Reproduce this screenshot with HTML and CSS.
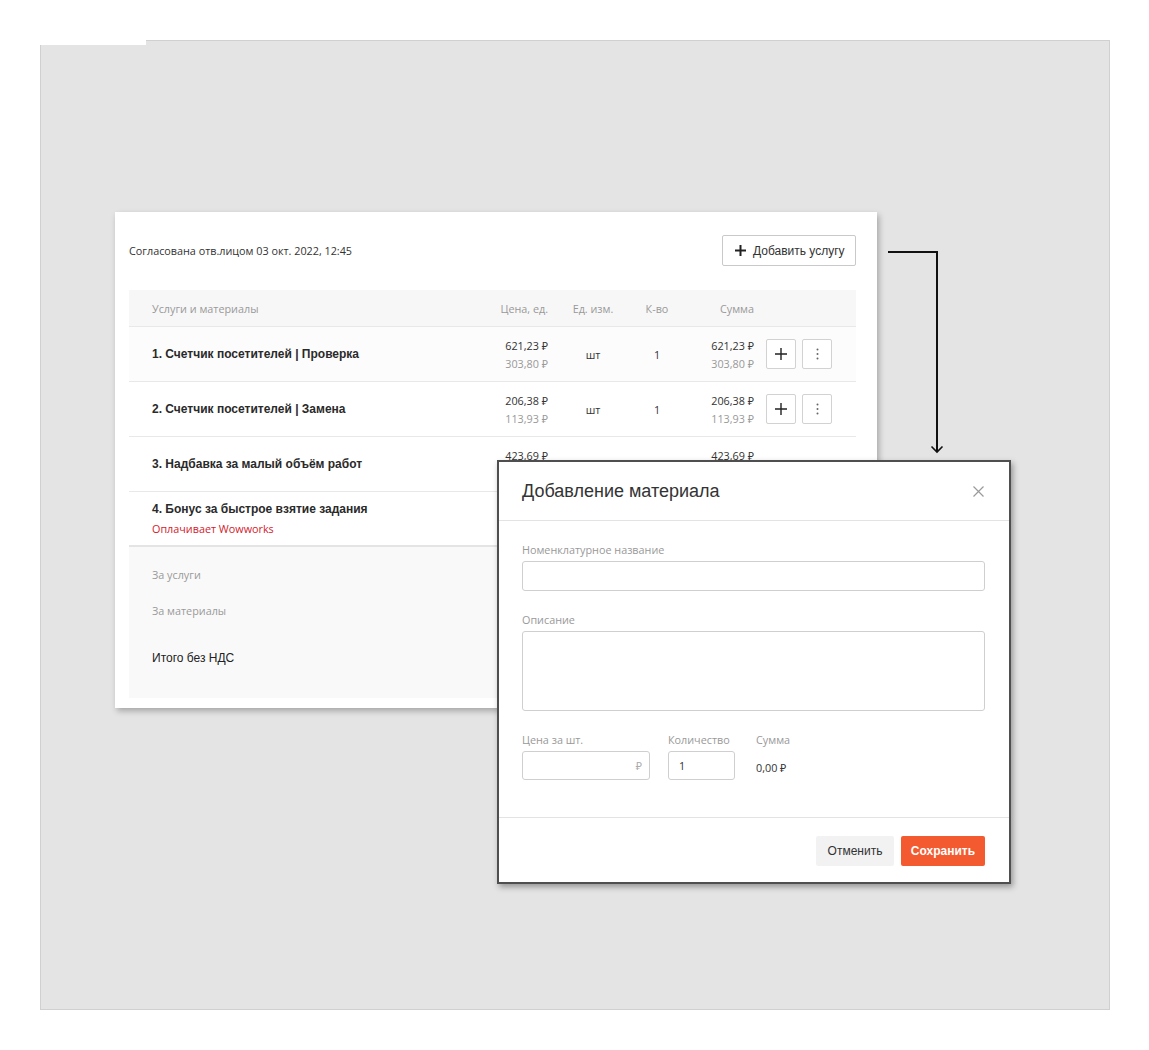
FILE: index.html
```html
<!DOCTYPE html>
<html lang="ru">
<head>
  <meta charset="UTF-8">
  <meta name="viewport" content="width=device-width, initial-scale=1.0">
  <title>Добавление материала</title>
  <link rel="stylesheet" href="styles.css">
</head>
<body>

<div class="canvas">
  <span class="corner"></span>

  <section class="card">
    <header class="card-head">
      <span class="status">Согласована отв.лицом 03 окт. 2022, 12:45</span>
      <button class="btn-add">
        <svg width="11" height="11" viewBox="0 0 11 11"><path d="M5.5 0v11M0 5.5h11" stroke="#222" stroke-width="2"/></svg>
        Добавить услугу
      </button>
    </header>

    <div class="table">
      <div class="row head">
        <span>Услуги и материалы</span>
        <span class="num">Цена, ед.</span>
        <span class="mid">Ед. изм.</span>
        <span class="mid">К-во</span>
        <span class="num">Сумма</span>
        <span></span>
      </div>

      <div class="row hover">
        <span class="name">1. Счетчик посетителей | Проверка</span>
        <span class="num price"><b>621,23 ₽</b><i>303,80 ₽</i></span>
        <span class="mid">шт</span>
        <span class="mid">1</span>
        <span class="num price"><b>621,23 ₽</b><i>303,80 ₽</i></span>
        <span class="actions">
          <button class="icon-btn"><svg width="12" height="12" viewBox="0 0 12 12"><path d="M6 0v12M0 6h12" stroke="#222" stroke-width="1.4"/></svg></button>
          <button class="icon-btn"><svg width="3" height="12" viewBox="0 0 3 12"><circle cx="1.5" cy="1.5" r="1" fill="#666"/><circle cx="1.5" cy="6" r="1" fill="#666"/><circle cx="1.5" cy="10.5" r="1" fill="#666"/></svg></button>
        </span>
      </div>

      <div class="row">
        <span class="name">2. Счетчик посетителей | Замена</span>
        <span class="num price"><b>206,38 ₽</b><i>113,93 ₽</i></span>
        <span class="mid">шт</span>
        <span class="mid">1</span>
        <span class="num price"><b>206,38 ₽</b><i>113,93 ₽</i></span>
        <span class="actions">
          <button class="icon-btn"><svg width="12" height="12" viewBox="0 0 12 12"><path d="M6 0v12M0 6h12" stroke="#222" stroke-width="1.4"/></svg></button>
          <button class="icon-btn"><svg width="3" height="12" viewBox="0 0 3 12"><circle cx="1.5" cy="1.5" r="1" fill="#666"/><circle cx="1.5" cy="6" r="1" fill="#666"/><circle cx="1.5" cy="10.5" r="1" fill="#666"/></svg></button>
        </span>
      </div>

      <div class="row">
        <span class="name">3. Надбавка за малый объём работ</span>
        <span class="num price"><b>423,69 ₽</b><i>423,69 ₽</i></span>
        <span></span>
        <span></span>
        <span class="num price"><b>423,69 ₽</b><i>423,69 ₽</i></span>
        <span></span>
      </div>

      <div class="row last">
        <span class="name">4. Бонус за быстрое взятие задания<small>Оплачивает Wowworks</small></span>
        <span></span>
        <span></span>
        <span></span>
        <span></span>
        <span></span>
      </div>

      <div class="summary">
        <div class="sum-line">За услуги</div>
        <div class="sum-line">За материалы</div>
        <div class="sum-line total">Итого без НДС</div>
      </div>
    </div>
  </section>

  <svg class="arrow" width="70" height="220" viewBox="0 0 70 220">
    <path d="M8 12H57V212" fill="none" stroke="#111" stroke-width="2"/>
    <path d="M51.5 206.5L57 212L62.5 206.5" fill="none" stroke="#111" stroke-width="1.6"/>
  </svg>

  <div class="modal">
    <header class="modal-head">
      <h2>Добавление материала</h2>
      <svg class="close" width="11" height="11" viewBox="0 0 11 11"><path d="M0.5 0.5l10 10M10.5 0.5l-10 10" stroke="#9a9a9a" stroke-width="1.2"/></svg>
    </header>

    <div class="modal-body">
      <label class="field">
        <span class="label">Номенклатурное название</span>
        <span class="input"></span>
      </label>
      <label class="field">
        <span class="label">Описание</span>
        <span class="input textarea"></span>
      </label>
      <div class="field-row">
        <label class="field price-field">
          <span class="label">Цена за шт.</span>
          <span class="input small suffix">₽</span>
        </label>
        <label class="field qty-field">
          <span class="label">Количество</span>
          <span class="input small">1</span>
        </label>
        <div class="field">
          <span class="label">Сумма</span>
          <span class="total-value">0,00 ₽</span>
        </div>
      </div>
    </div>

    <footer class="modal-foot">
      <button class="btn-cancel">Отменить</button>
      <button class="btn-save">Сохранить</button>
    </footer>
  </div>
</div>

</body>
</html>
```

FILE: styles.css
```css
* {
  box-sizing: border-box;
}

body {
  margin: 0;
  background: #fff;
  font-family: "Open Sans", "Noto Sans", "DejaVu Sans", sans-serif;
  color: #333;
}

button {
  font-family: inherit;
  cursor: pointer;
}

.canvas {
  position: relative;
  width: 1070px;
  height: 970px;
  margin: 40px 0 0 40px;
  border: 1px solid #d0d0d0;
  background: #e4e4e4;
}

.corner {
  position: absolute;
  left: -2px;
  top: -2px;
  width: 107px;
  height: 6px;
  background: #fff;
}

/* Card with the services table */
.card {
  position: absolute;
  left: 74px;
  top: 171px;
  width: 762px;
  height: 496px;
  padding: 23px 21px 10px 14px;
  background: #fff;
  box-shadow: 2px 3px 6px rgba(0, 0, 0, 0.28);
}

.card-head {
  display: flex;
  justify-content: space-between;
  align-items: center;
  height: 31px;
  margin-bottom: 24px;
}

.status {
  font-size: 10.8px;
  color: #333;
}

.btn-add {
  display: flex;
  align-items: center;
  gap: 7px;
  width: 134px;
  height: 31px;
  padding: 0 10px 0 12px;
  border: 1px solid #c9c9c9;
  border-radius: 2px;
  background: #fff;
  font-family: "Liberation Sans", Arial, sans-serif;
  font-size: 12px;
  color: #333;
  white-space: nowrap;
}

.row {
  display: grid;
  grid-template-columns: 1fr 58px 90px 38px 78px 78px;
  align-items: center;
  height: 55px;
  padding: 0 24px 0 23px;
  border-bottom: 1px solid #e8e8e8;
  font-size: 10.8px;
  color: #333;
}

.row.head {
  height: 37px;
  background: #f7f7f7;
  color: #999;
}

.row.hover {
  background: #fcfcfc;
}

.row.last {
  border-bottom: 2px solid #e4e4e4;
}

.num {
  text-align: right;
}

.mid {
  text-align: center;
}

.name {
  font-family: "Liberation Sans", Arial, sans-serif;
  font-size: 12px;
  font-weight: bold;
  color: #2a2a2a;
}

.name small {
  display: block;
  margin-top: 5px;
  font-family: "Open Sans", "Noto Sans", sans-serif;
  font-size: 10.8px;
  font-weight: normal;
  color: #d4202a;
}

.price {
  display: flex;
  flex-direction: column;
  align-items: flex-end;
  gap: 3px;
  white-space: nowrap;
}

.price b {
  font-weight: normal;
  color: #333;
}

.price i {
  font-style: normal;
  color: #999;
}

.actions {
  display: flex;
  justify-content: flex-end;
  gap: 6px;
}

.icon-btn {
  display: flex;
  align-items: center;
  justify-content: center;
  width: 30px;
  height: 30px;
  padding: 0;
  border: 1px solid #d2d2d2;
  border-radius: 2px;
  background: #fff;
}

.summary {
  height: 151px;
  padding: 20px 23px 0;
  background: #f9f9f9;
}

.sum-line {
  height: 16px;
  line-height: 16px;
  font-size: 10.8px;
  color: #999;
}

.sum-line + .sum-line {
  margin-top: 20px;
}

.sum-line.total {
  margin-top: 31px;
  font-family: "Liberation Sans", Arial, sans-serif;
  font-size: 12px;
  color: #222;
}

.arrow {
  position: absolute;
  left: 839px;
  top: 199px;
}

/* Modal window */
.modal {
  position: absolute;
  left: 456px;
  top: 419px;
  display: flex;
  flex-direction: column;
  width: 514px;
  height: 424px;
  border: 2px solid #4f4f4f;
  background: #fff;
  box-shadow: 2px 3px 6px rgba(0, 0, 0, 0.35);
}

.modal-head {
  display: flex;
  justify-content: space-between;
  align-items: center;
  height: 59px;
  padding: 0 25px 0 23px;
  border-bottom: 1px solid #e3e3e3;
}

.modal-head h2 {
  margin: 0;
  font-family: "Liberation Sans", Arial, sans-serif;
  font-size: 18px;
  font-weight: normal;
  color: #333;
}

.modal-body {
  flex: 1;
  padding: 21px 24px 0 23px;
}

.field {
  display: flex;
  flex-direction: column;
  gap: 4px;
  margin-bottom: 21px;
}

.label {
  height: 15px;
  line-height: 15px;
  font-size: 10.8px;
  color: #999;
}

.input {
  display: flex;
  align-items: center;
  height: 30px;
  padding: 0 10px;
  border: 1px solid #cfcfcf;
  border-radius: 3px;
  font-size: 10.8px;
  color: #333;
}

.input.textarea {
  height: 80px;
}

.field-row {
  display: flex;
}

.field-row .field {
  margin-bottom: 0;
}

.price-field {
  width: 128px;
  margin-right: 18px;
}

.qty-field {
  width: 67px;
  margin-right: 21px;
}

.input.small {
  height: 29px;
}

.input.suffix {
  justify-content: flex-end;
  padding-right: 7px;
  color: #aaa;
}

.total-value {
  height: 29px;
  line-height: 33px;
  font-size: 10.8px;
  color: #333;
}

.modal-foot {
  display: flex;
  justify-content: flex-end;
  gap: 7px;
  height: 65px;
  padding: 18px 24px 0;
  border-top: 1px solid #e3e3e3;
}

.btn-cancel,
.btn-save {
  height: 30px;
  border: none;
  border-radius: 2px;
  font-family: "Liberation Sans", Arial, sans-serif;
  font-size: 12px;
}

.btn-cancel {
  width: 78px;
  background: #f2f2f2;
  color: #333;
}

.btn-save {
  width: 84px;
  background: #f45a30;
  color: #fff;
  font-weight: bold;
}
```
